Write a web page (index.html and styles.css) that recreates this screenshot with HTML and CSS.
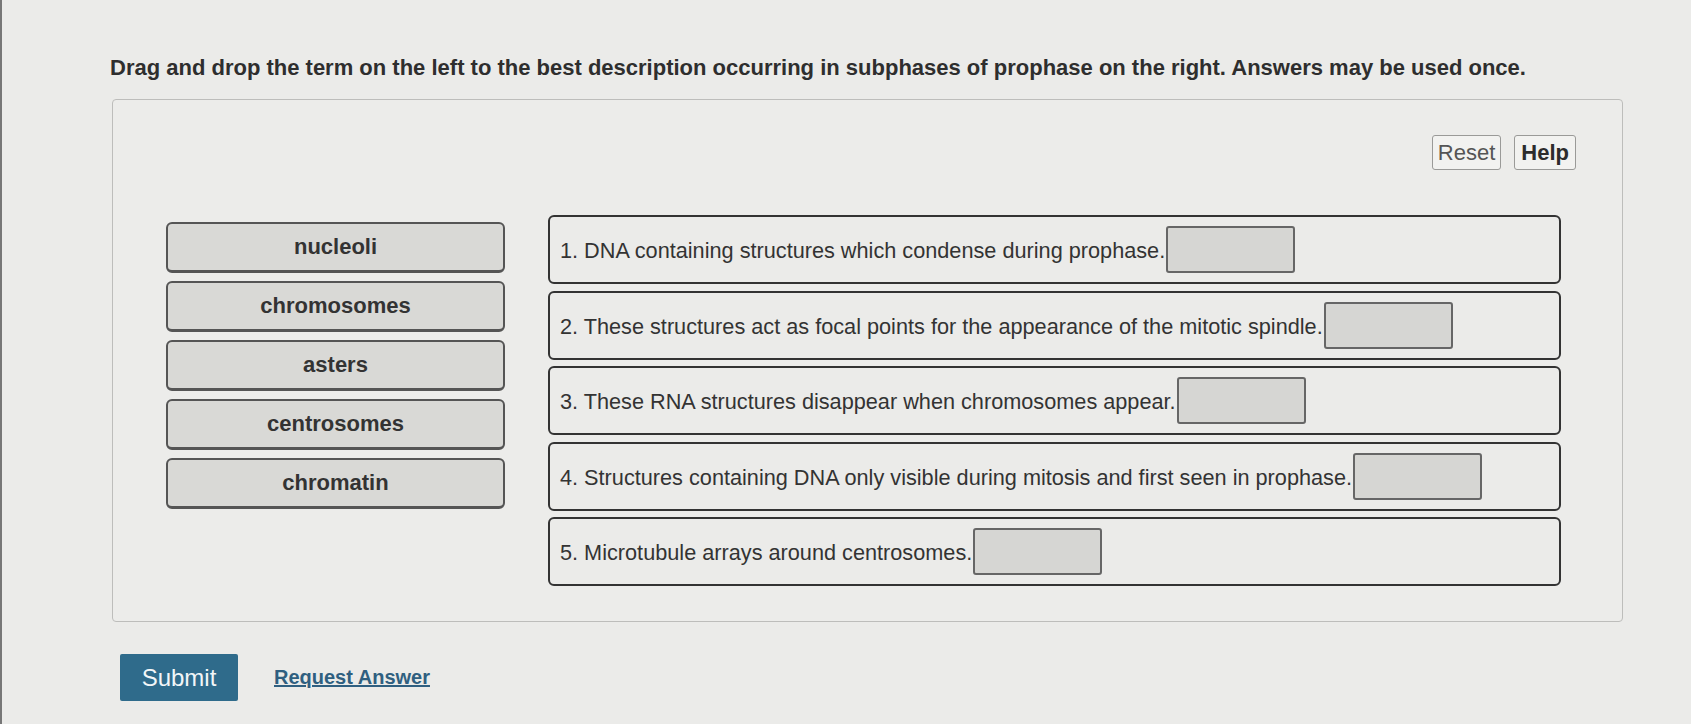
FILE: index.html
```html
<!DOCTYPE html>
<html lang="en">
<head>
	<meta charset="UTF-8">
	<title>Prophase drag and drop</title>
	<link rel="stylesheet" href="styles.css">
</head>
<body>
	<div class="page">
		<p class="prompt">Drag and drop the term on the left to the best description occurring in subphases of prophase on the right. Answers may be used once.</p>

		<div class="panel">
			<div class="toolbar">
				<button class="tool_btn">Reset</button>
				<button class="tool_btn tool_help">Help</button>
			</div>

			<div class="board">
				<ul class="terms">
					<li>nucleoli</li>
					<li>chromosomes</li>
					<li>asters</li>
					<li>centrosomes</li>
					<li>chromatin</li>
				</ul>
				<ol class="descs">
					<li><span>1. DNA containing structures which condense during prophase.</span><span class="drop"></span></li>
					<li><span>2. These structures act as focal points for the appearance of the mitotic spindle.</span><span class="drop"></span></li>
					<li><span>3. These RNA structures disappear when chromosomes appear.</span><span class="drop"></span></li>
					<li><span>4. Structures containing DNA only visible during mitosis and first seen in prophase.</span><span class="drop"></span></li>
					<li><span>5. Microtubule arrays around centrosomes.</span><span class="drop"></span></li>
				</ol>
			</div>
		</div>

		<div class="actions">
			<button class="submit">Submit</button>
			<a class="request" href="#">Request Answer</a>
		</div>
	</div>
</body>
</html>
```

FILE: styles.css
```css
*{
	margin: 0;
	padding: 0;
	box-sizing: border-box;
}
body {
	background-color: #ebebe9;
	font-family: "Liberation Sans", Arial, sans-serif;
	color: #333;
	border-left: 2px solid #777;
	height: 724px;
	overflow: hidden;
}
li {
	list-style: none;
}
.page {
	padding: 54px 0 0 108px;
}
.prompt {
	font-size: 22px;
	font-weight: bold;
	color: #2e2e2e;
	line-height: 28px;
}
.panel {
	width: 1511px;
	height: 523px;
	margin-top: 17px;
	margin-left: 2px;
	border: 1px solid #bdbdbb;
	border-radius: 4px;
	background-color: #ececea;
	padding: 35px 46px 0 53px;
}
.toolbar {
	display: flex;
	justify-content: flex-end;
	gap: 13px;
}
.tool_btn {
	height: 35px;
	padding: 0 5px;
	font-family: "Liberation Sans", Arial, sans-serif;
	font-size: 22px;
	color: #555;
	background-color: #f2f2f0;
	border: 1px solid #9a9a98;
	border-radius: 3px;
}
.tool_btn.tool_help {
	font-weight: bold;
	color: #2c2c2c;
	padding: 0 6px;
}
.board {
	display: flex;
	gap: 43px;
	margin-top: 45px;
}
.terms {
	width: 339px;
	padding-top: 7px;
	display: flex;
	flex-direction: column;
	gap: 8px;
}
.terms li {
	height: 51px;
	line-height: 45px;
	text-align: center;
	font-size: 22px;
	font-weight: bold;
	color: #333;
	background-color: #d9d9d6;
	border: 2px solid #555;
	border-bottom-width: 3px;
	border-radius: 6px;
}
.descs {
	width: 1013px;
	display: flex;
	flex-direction: column;
	gap: 6.5px;
}
.descs li {
	height: 69px;
	display: flex;
	align-items: center;
	padding-left: 10px;
	padding-top: 3px;
	font-size: 21.7px;
	color: #333;
	border: 2px solid #333;
	border-radius: 6px;
	background-color: #ebebe9;
}
.descs .drop {
	width: 129px;
	height: 47px;
	margin-left: 1px;
	margin-top: -3px;
	background-color: #d6d6d3;
	border: 2px solid #666;
	border-radius: 3px;
}
.actions {
	display: flex;
	align-items: center;
	gap: 36px;
	margin-top: 32px;
	padding-left: 10px;
}
.submit {
	width: 118px;
	height: 47px;
	font-family: "Liberation Sans", Arial, sans-serif;
	font-size: 24px;
	color: #f2f6f8;
	background-color: #2f6b8b;
	border: none;
	border-radius: 2px;
}
.request {
	font-size: 20px;
	font-weight: bold;
	color: #2f5f80;
	text-decoration: underline;
}
```
